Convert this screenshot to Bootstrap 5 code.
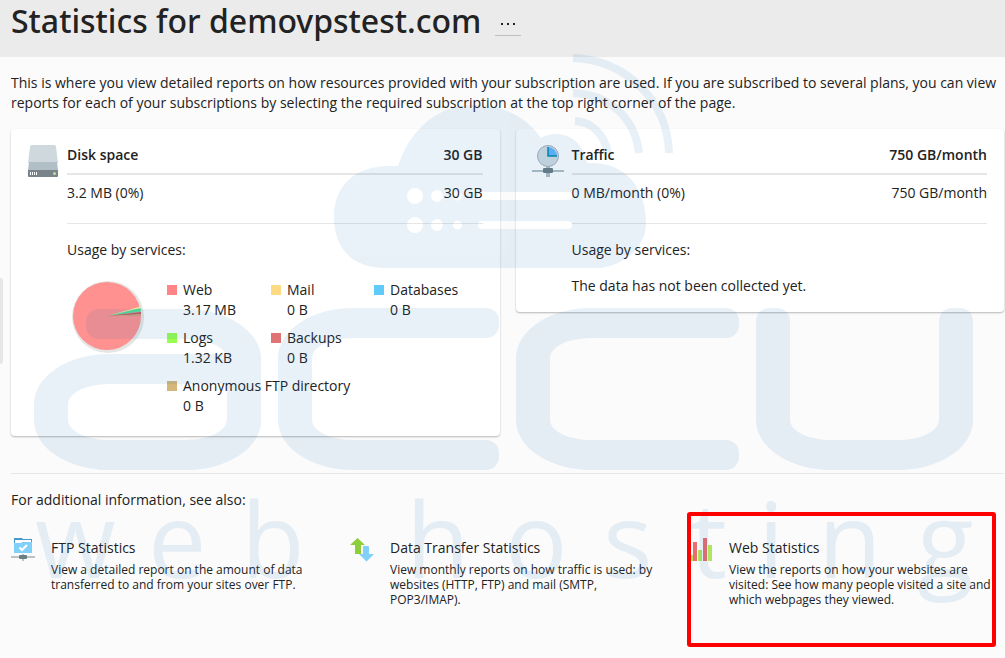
<!DOCTYPE html>
<html lang="en">
<head>
<meta charset="utf-8">
<meta name="viewport" content="width=device-width, initial-scale=1">
<title>Statistics for demovpstest.com</title>
<link href="https://cdn.jsdelivr.net/npm/bootstrap@5.3.0/dist/css/bootstrap.min.css" rel="stylesheet">
<style>
body { font: 14px/20px "Open Sans", sans-serif; color: #222; background: #fbfbfb; }
.page-head { background: #ebebeb; height: 57px; padding-left: 11px; gap: 14px; }
.page-head h1 { font-family: "Noto Sans", "Open Sans", sans-serif; font-size: 32px; line-height: 42px; font-weight: 500; }
.more-btn { width: 26px; height: 28px; border: 0; border-bottom: 1px solid #bfbfbf; background: none; padding: 4px 0 0; }
.page-body { padding: 16px 1px 51px 11px; }
.stat-grid { display: grid; grid-template-columns: 1fr 1fr; gap: 16px; align-items: start; }
.stat-card { padding: 16px 17px 16px 16px; border: 0; border-radius: 4px; box-shadow: 0 1px 2px rgba(0,0,0,.28); gap: 8px; }
.stat-icon { width: 32px; height: 32px; flex: none; }
.stat-top { padding-bottom: 8px; border-bottom: 2px solid #e6e6e6; font-weight: 600; }
.stat-row { padding: 8px 0 20px; border-bottom: 1px solid #e6e6e6; margin-bottom: 16px; }
.pie { width: 84px; height: 84px; flex: none; }
.legend-grid { display: grid; grid-template-columns: 104px 103px auto; gap: 8px 0; padding-bottom: 4px; }
.legend-grid dt { font-weight: 400; display: flex; align-items: center; gap: 6px; }
.legend-grid dt i { width: 10px; height: 10px; }
.legend-grid dd { margin: 0 0 0 16px; }
.legend-grid .wide { grid-column: span 3; }
.rule { margin: 37px 0 16px; border-top: 1px solid #e6e6e6; }
.tool-grid { display: grid; grid-template-columns: repeat(3, 1fr); gap: 24px; }
.tool { gap: 16px; }
.tool svg { width: 24px; height: 24px; flex: none; }
.tool a { color: #222; text-decoration: none; }
.tool p { font-size: 12px; line-height: 15px; margin: 4px 0 0; }
.highlight { position: absolute; inset: -26px 8px -40px -2px; border: 4px solid #f00; border-radius: 3px; pointer-events: none; z-index: 2; }
.side-handle { position: absolute; left: 0; top: 278px; width: 3px; height: 86px; padding: 0; border: 0; background: #e6e6e6; border-radius: 0 3px 3px 0; }
.brand-mark { position: absolute; inset: 0 0 auto 0; opacity: .09; pointer-events: none; color: #0f69b9; }
.brand-mark svg { display: block; width: 100%; overflow: visible; }
.brand-row { display: grid; grid-template-columns: 227fr 222fr 223fr 217fr; column-gap: 17px; height: 162px; margin: 0 32px 0 34px; }
.shape { position: relative; }
.shape::before, .shape::after, .bowl { content: ""; position: absolute; }
.shape-a::before { inset: 1px 0 0 65px; border: 30px solid; border-right-width: 34px; border-left: 0; border-radius: 0 75px 75px 0 / 0 50px 50px 0; }
.shape-a::after { left: 52px; top: 1px; width: 13px; height: 30px; background: currentColor; border-radius: 13px 0 0 13px; }
.bowl { inset: 46px 0 0 0; border: 30px solid; border-width: 30px 34px; border-radius: 75px 0 75px 75px / 50px 0 50px 50px; }
.shape-c { margin-right: 13px; border: 30px solid; border-left-width: 34px; border-right: 0; border-radius: 75px 0 0 75px / 50px 0 0 50px; }
.shape-c::before, .shape-c::after { right: -13px; width: 13px; height: 30px; background: currentColor; border-radius: 0 13px 13px 0; }
.shape-c::before { top: -30px; }
.shape-c::after { bottom: -30px; }
.shape-u { margin-top: 13px; border: 34px solid; border-top: 0; border-bottom-width: 30px; border-radius: 0 0 75px 75px / 0 0 50px 50px; }
.shape-u::before, .shape-u::after { top: -13px; width: 34px; height: 13px; background: currentColor; border-radius: 13px 13px 0 0; }
.shape-u::before { left: -34px; }
.shape-u::after { right: -34px; }
</style>
</head>
<body class="position-relative">
<header class="page-head d-flex align-items-start">
  <h1 class="m-0">Statistics for demovpstest.com</h1>
  <button type="button" class="more-btn d-flex align-items-center justify-content-center mt-2" aria-label="More">
    <svg width="14" height="2" fill="#222"><rect width="2" height="2"/><rect x="6" width="2" height="2"/><rect x="12" width="2" height="2"/></svg>
  </button>
</header>
<button type="button" class="side-handle" aria-label="Show sidebar"></button>

<main class="page-body">
  <p class="mb-3">This is where you view detailed reports on how resources provided with your subscription are used. If you are subscribed to several plans, you can view reports for each of your subscriptions by selecting the required subscription at the top right corner of the page.</p>

  <div class="stat-grid">
    <section class="card stat-card flex-row">
      <svg class="stat-icon" viewBox="0 0 32 32"><path d="M3 2q0-2 2-2h22q2 0 2 2l2 16H1z" fill="#cfd8dc"/><path d="M2 17h28l1 8H1z" fill="#b0bec5"/><path d="M1 25h30v6q0 1-1 1H2q-1 0-1-1z" fill="#78848a"/><path d="M3 27h1v3H3zm2 0h1v3H5zm2 0h1v3H7zm2 0h1v3H9z" fill="#fff"/><circle cx="27.500" cy="28.500" r="1.500" fill="#b5e49a"/></svg>
      <div class="flex-grow-1">
        <div class="stat-top d-flex justify-content-between"><span>Disk space</span><span>30 GB</span></div>
        <div class="stat-row d-flex justify-content-between"><span>3.2 MB (0%)</span><span>30 GB</span></div>
        <div>Usage by services:</div>
        <div class="d-flex gap-3 mt-3 pt-1">
          <svg class="pie" viewBox="0 0 84 84"><circle cx="41" cy="37" r="36" fill="#e4e6e3"/><circle cx="40" cy="36" r="34" fill="#ff9191"/><path d="M40 36L73 26.500 73.500 29z" fill="#fbe0a0"/><path d="M40 36L73.500 28 74 31.500z" fill="#52e096"/><path d="M40 36L74 32V34z" fill="#b85f68"/><path d="M40 36L74 34.500V36z" fill="#c9a36e"/></svg>
          <dl class="legend-grid m-0">
            <div><dt><i style="background:#ff8589"></i>Web</dt><dd>3.17 MB</dd></div>
            <div><dt><i style="background:#ffda85"></i>Mail</dt><dd>0 B</dd></div>
            <div><dt><i style="background:#5fcbfb"></i>Databases</dt><dd>0 B</dd></div>
            <div><dt><i style="background:#96ff4f"></i>Logs</dt><dd>1.32 KB</dd></div>
            <div><dt><i style="background:#e07474"></i>Backups</dt><dd>0 B</dd></div>
            <div class="wide"><dt><i style="background:#d4b679"></i>Anonymous FTP directory</dt><dd>0 B</dd></div>
          </dl>
        </div>
      </div>
    </section>

    <section class="card stat-card flex-row">
      <svg class="stat-icon" viewBox="0 0 32 32"><path d="M0 25h32v2H0zM14 22h4v10h-4z" fill="#b0bec5"/><rect x="11" y="23" width="10" height="5" rx="1" fill="#6c7c85"/><circle cx="16" cy="11" r="10.500" fill="#d3dce2" stroke="#a5afb8"/><path d="M16 2a9 9 0 0 1 9 9h-9z" fill="#64b5ff"/><path d="M16 2v9h9" fill="none" stroke="#0288a8" stroke-width="1.500"/></svg>
      <div class="flex-grow-1">
        <div class="stat-top d-flex justify-content-between"><span>Traffic</span><span>750 GB/month</span></div>
        <div class="stat-row d-flex justify-content-between"><span>0 MB/month (0%)</span><span>750 GB/month</span></div>
        <div>Usage by services:</div>
        <div class="mt-3">The data has not been collected yet.</div>
      </div>
    </section>
  </div>

  <div class="rule"></div>
  <p class="mb-0">For additional information, see also:</p>

  <div class="tool-grid mt-4 pt-1">
    <div class="tool d-flex">
      <svg viewBox="0 0 24 24"><path d="M3 0h8l1 1h9v7H3z" fill="#4a9ac9"/><path d="M4 2h16v5H4z" fill="#fff"/><path d="M3 5h7l1-1h10v11H3z" fill="#81d0fa"/><path d="M8.500 9.500l2.500 2.500 5-5" fill="none" stroke="#fff" stroke-width="2"/><path d="M0 18h24v2H0zM11 16h2v7h-2z" fill="#b9c3c7"/><rect x="8" y="17" width="8" height="4" rx="1" fill="#6b7f83"/></svg>
      <div><a href="#">FTP Statistics</a><p>View a detailed report on the amount of data transferred to and from your sites over FTP.</p></div>
    </div>
    <div class="tool d-flex">
      <svg viewBox="0 0 24 24"><path d="M7.500 0L15 7h-4v9H5V7H0z" fill="#8fce3a"/><path d="M13 9q0-1 1-1h4q1 0 1 1v7h5l-7.500 7.500L9 16h4z" fill="#81d0fa"/></svg>
      <div><a href="#">Data Transfer Statistics</a><p>View monthly reports on how traffic is used: by websites (HTTP, FTP) and mail (SMTP, POP3/IMAP).</p></div>
    </div>
    <div class="tool d-flex position-relative">
      <svg viewBox="0 0 24 24"><path d="M0 17h4v6H0zM9 12h4v11H9zM19 7h4v16h-4z" fill="#aee75e"/><path d="M4 4h4v19H4zM14 0h4v23h-4z" fill="#ee6c70"/></svg>
      <div><a href="#">Web Statistics</a><p>View the reports on how your websites are visited: See how many people visited a site and which webpages they viewed.</p></div>
      <div class="highlight"></div>
    </div>
  </div>
</main>

<div class="brand-mark" role="img" aria-label="accu web hosting">
  <svg viewBox="0 0 1005 308" fill="currentColor">
    <path fill-rule="evenodd" d="M390 166h8C410 130 437 105 473 105c30 0 52 11 68 33 16-9 41-3 46 25 38-2 59 24 59 60 0 22-18 41-46 45H385c-33 0-51-20-51-51s20-51 56-51zM407 196a8 8 0 1 0 16 0a8 8 0 1 0-16 0zM431 196a6 6 0 1 0 12 0a6 6 0 1 0-12 0zM407 225a8 8 0 1 0 16 0a8 8 0 1 0-16 0zM431 225a6 6 0 1 0 12 0a6 6 0 1 0-12 0zM453 225a4.500 4.500 0 1 0 9 0a4.500 4.500 0 1 0-9 0zM453 196a4.500 4.500 0 1 0 9 0a4.500 4.500 0 1 0-9 0zM482 192h86a4 4 0 0 1 0 8h-86a4 4 0 0 1 0-8zM482 221h86a4 4 0 0 1 0 8h-86a4 4 0 0 1 0-8z"/>
    <path fill="none" stroke="currentColor" stroke-width="8" d="M573 58c54 2 95 44 96 95M573 93c35 1 62 24 66 60M575 121c17 1 29 13 33 32"/>
  </svg>
  <div class="brand-row">
    <div class="shape shape-a"><span class="bowl"></span></div>
    <div class="shape shape-c"></div>
    <div class="shape shape-c"></div>
    <div class="shape shape-u"></div>
  </div>
  <svg viewBox="0 0 1005 150" fill="currentColor"><text y="108" x="35 148 241 406 505 603 690 758 818 917" font-family="Open Sans, sans-serif" font-weight="400" font-size="104">webhosting</text></svg>
</div>
<script src="https://cdn.jsdelivr.net/npm/bootstrap@5.3.0/dist/js/bootstrap.bundle.min.js"></script>
</body>
</html>
